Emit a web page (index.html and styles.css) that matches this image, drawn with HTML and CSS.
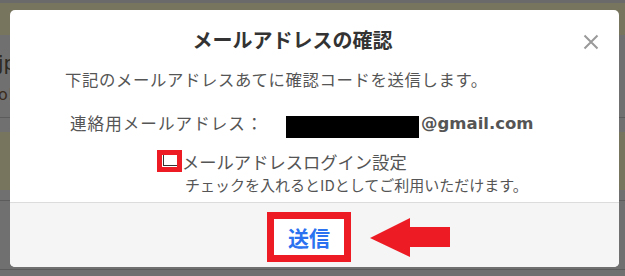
FILE: index.html
```html
<!DOCTYPE html>
<html lang="ja">
<head>
<meta charset="utf-8">
<title>メールアドレスの確認</title>
<link rel="stylesheet" href="styles.css">
</head>
<body>
<div class="page">
  <div class="band-top"></div>
  <div class="band-olive b1"></div>
  <div class="band-gray b2">
    <div class="frag jp">jp</div>
    <div class="frag ob">o!</div>
  </div>
  <div class="band-line"></div>
  <div class="band-gray b3"></div>
  <div class="band-olive b4"></div>
  <div class="band-gray b5"></div>
  <div class="band-line"></div>
  <div class="band-gray b6"></div>
  <div class="band-line"></div>
  <div class="band-gray b7"></div>

  <div class="modal">
    <div class="modal-header">
      <div class="modal-title">メールアドレスの確認</div>
      <div class="modal-close">
        <svg width="16" height="16" viewBox="0 0 16 16"><path d="M1.5 1.5 L14.5 14.5 M14.5 1.5 L1.5 14.5" stroke="#9a9a9a" stroke-width="2" fill="none"/></svg>
      </div>
    </div>
    <div class="modal-body">
      <div class="row lead">下記のメールアドレスあてに確認コードを送信します。</div>
      <div class="row addr">
        <span class="addr-label">連絡用メールアドレス：</span>
        <span class="redact"></span><span class="addr-domain">@gmail.com</span>
      </div>
      <div class="row check">
        <span class="check-mark"><span class="check-box"></span></span>
        <span class="check-label">メールアドレスログイン設定</span>
      </div>
      <div class="row note">チェックを入れるとIDとしてご利用いただけます。</div>
    </div>
    <div class="modal-footer">
      <div class="send-frame"><span class="send">送信</span></div>
      <svg class="arrow" width="80" height="40" viewBox="0 0 80 40"><polygon points="0,20 40,0 40,9 80,9 80,29 40,29 40,39" fill="#ed1c24"/></svg>
    </div>
  </div>
</div>
</body>
</html>
```
FILE: styles.css
```css
html, body {
  margin: 0;
  padding: 0;
}
body {
  width: 625px;
  height: 276px;
  overflow: hidden;
  background: #6f6f6f;
  font-family: "Noto Sans CJK JP", "DejaVu Sans", sans-serif;
}
.page {
  position: relative;
  width: 625px;
  height: 276px;
  display: flex;
  flex-direction: column;
}
.band-top { height: 3px; background: #6a6a6a; }
.band-olive { background: #78755f; }
.band-gray { background: #707070; position: relative; }
.band-line { height: 1px; background: #5c5c5c; }
.b1 { height: 32px; }
.b2 { height: 82px; }
.b3 { height: 14px; }
.b4 { height: 58px; }
.b5 { height: 10px; }
.b6 { height: 68px; }
.b7 { flex: 1; }
.frag {
  position: absolute;
  left: -2px;
  color: #2d2a22;
  font-family: "DejaVu Sans", sans-serif;
}
.frag.jp { top: 16px; font-size: 20px; }
.frag.ob { top: 50px; font-size: 16px; color: #3b2c1e; }

.modal {
  position: absolute;
  left: 10px;
  top: 10px;
  width: 609px;
  height: 257px;
  background: #fff;
  border-radius: 5px;
  display: flex;
  flex-direction: column;
  overflow: hidden;
}
.modal-header {
  display: flex;
  height: 52px;
  padding-top: 16px;
  box-sizing: border-box;
}
.modal-title {
  flex: 1;
  text-align: center;
  font-size: 20px;
  line-height: 28px;
  font-weight: bold;
  color: #333;
}
.modal-close {
  width: 44px;
  padding-top: 5px;
  padding-left: 8px;
  box-sizing: border-box;
}
.modal-body {
  flex: 1;
  color: #555;
}
.row {
  display: flex;
  align-items: center;
}
.lead {
  margin-top: 5px;
  height: 24px;
  font-size: 16.4px;
  letter-spacing: 0.6px;
  padding-left: 55px;
}
.addr {
  margin-top: 20px;
  height: 24px;
  font-size: 16.6px;
  padding-left: 60px;
}
.addr-label { width: 216px; letter-spacing: 1px; }
.redact {
  width: 133px;
  height: 22px;
  background: #000;
  margin-top: 7px;
}
.addr-domain {
  font-family: "DejaVu Sans", sans-serif;
  font-weight: bold;
  font-size: 16.5px;
  color: #555;
  margin-left: 2px;
}
.check {
  margin-top: 14px;
  height: 24px;
  padding-left: 147px;
}
.check-mark {
  width: 25px;
  height: 22px;
  box-sizing: border-box;
  border: 5px solid #ed1c24;
  background: #fff;
  position: relative;
}
.check-box {
  position: absolute;
  left: 1px;
  top: 0;
  width: 13px;
  height: 10px;
  border-left: 1px solid #333;
  border-bottom: 1px solid #333;
}
.check-label {
  font-size: 17.3px;
}
.note {
  margin-top: 1px;
  height: 20px;
  font-size: 15px;
  padding-left: 175px;
}
.modal-footer {
  height: 64px;
  border-top: 1px solid #dcdcdc;
  background: #f5f5f5;
  position: relative;
  display: flex;
  justify-content: center;
  align-items: center;
}
.send-frame {
  width: 84px;
  height: 50px;
  box-sizing: border-box;
  border: 7px solid #ed1c24;
  background: #fff;
  display: flex;
  align-items: center;
  justify-content: center;
  margin-left: -11px;
  margin-top: 4px;
}
.send {
  color: #2a72f0;
  font-weight: bold;
  font-size: 21px;
}
.arrow {
  position: absolute;
  left: 360px;
  top: 15px;
}
```
